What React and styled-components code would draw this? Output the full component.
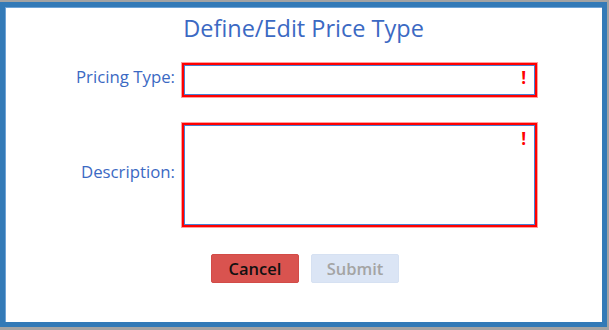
import React from "react";
import styled, { createGlobalStyle } from "styled-components";

const Global = createGlobalStyle`
  html, body { margin: 0; padding: 0; }
  body {
    background: #a3a3a3;
    width: 609px;
    height: 330px;
    overflow: hidden;
    font-family: "Open Sans", "Noto Sans", sans-serif;
  }
`;

const Dialog = styled.div`
  box-sizing: border-box;
  margin-top: 2px;
  width: 607px;
  height: 325px;
  background: #ffffff;
  border: 5px solid #337ab7;
  box-shadow: inset 1px 1px 0 #6fa3d6;
  display: flex;
  flex-direction: column;
`;

const Title = styled.h1`
  margin: 0;
  padding-top: 5px;
  font-size: 23.5px;
  font-weight: 400;
  line-height: 32px;
  color: #3b69c3;
  text-align: center;
`;

const Form = styled.div`
  margin-top: 19px;
  display: grid;
  grid-template-columns: 170px 355px;
  column-gap: 7px;
  row-gap: 26px;
  align-items: center;
`;

const Label = styled.label`
  text-align: right;
  font-size: 16.8px;
  line-height: 22px;
  padding-bottom: 6px;
  color: #3b69c3;
`;

const Field = styled.div`
  position: relative;
  box-sizing: border-box;
  height: ${(p) => p.$h}px;
  background: #fff;
  border: 2px solid #ff0000;
  box-shadow: 0 0 0 1px rgba(255, 40, 40, 0.45), inset 0 0 0 1px #4a7fd0;
`;

const Bang = styled.span`
  position: absolute;
  top: ${(p) => p.$top}px;
  right: 9px;
  font-size: 17px;
  font-weight: 700;
  line-height: 17px;
  color: #ff0000;
`;

const Buttons = styled.div`
  margin-top: 27px;
  padding-left: 206px;
  display: flex;
  gap: 12px;
`;

const Button = styled.button`
  box-sizing: border-box;
  width: 88px;
  height: 29px;
  border: 1px solid ${(p) => (p.$primary ? "#d24b47" : "#d6e1f2")};
  border-radius: 2px;
  background: ${(p) => (p.$primary ? "#d9534f" : "#dbe5f5")};
  color: ${(p) => (p.$primary ? "#111111" : "#a4a4a4")};
  font-family: "Open Sans", "Noto Sans", sans-serif;
  font-size: 16.5px;
  font-weight: 600;
  padding: 0;
  cursor: pointer;
`;

export default function App() {
  return (
    <>
      <Global />
      <Dialog>
        <Title>Define/Edit Price Type</Title>
        <Form>
          <Label>Pricing Type:</Label>
          <Field $h={34}>
            <Bang $top={4}>!</Bang>
          </Field>
          <Label>Description:</Label>
          <Field $h={104}>
            <Bang $top={5}>!</Bang>
          </Field>
        </Form>
        <Buttons>
          <Button $primary>Cancel</Button>
          <Button disabled>Submit</Button>
        </Buttons>
      </Dialog>
    </>
  );
}
